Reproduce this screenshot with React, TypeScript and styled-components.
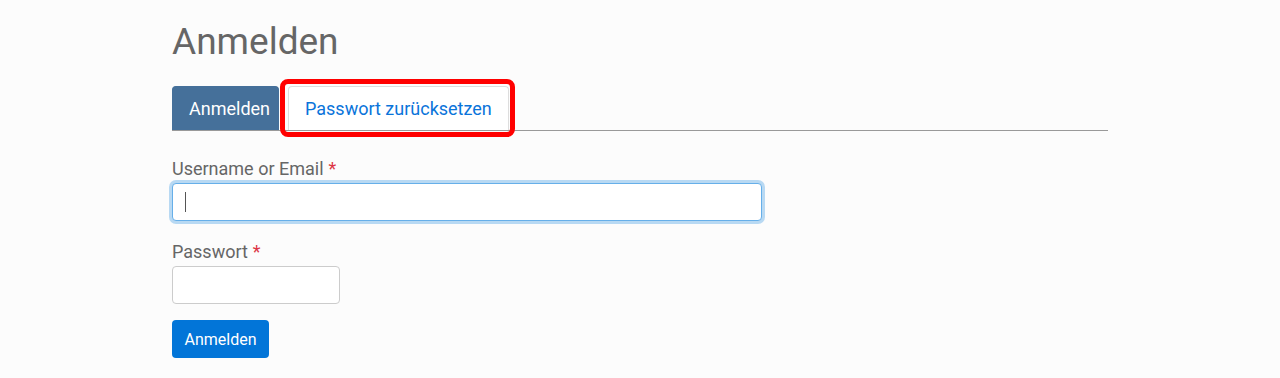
import React from "react";
import styled, { createGlobalStyle } from "styled-components";

const GlobalStyle = createGlobalStyle`
  html, body {
    margin: 0;
    padding: 0;
    background: #fcfcfc;
    font-family: Roboto, "Liberation Sans", Arial, sans-serif;
  }
  * { box-sizing: border-box; }
`;

const Page = styled.main`
  width: 936px;
  margin: 0 auto;
  padding-top: 20px;
`;

const Title = styled.h1`
  margin: 0 0 22px;
  font-size: 37px;
  line-height: 1.2;
  font-weight: 400;
  color: #666;
`;

const TabBar = styled.nav`
  display: flex;
  align-items: flex-end;
  gap: 9px;
  border-bottom: 1px solid #999;
  margin-bottom: 27px;
`;

const Tab = styled.a<{ $active?: boolean }>`
  position: relative;
  display: block;
  height: 44px;
  padding: ${(p) => (p.$active ? "10px 8px 10px 16px" : "10px 16px")};
  font-size: 18px;
  line-height: 24px;
  text-decoration: none;
  border-radius: 4px 4px 0 0;
  border: 1px solid ${(p) => (p.$active ? "#45709a" : "#ddd")};
  border-bottom: none;
  background: ${(p) => (p.$active ? "#45709a" : "#fff")};
  color: ${(p) => (p.$active ? "#fff" : "#0a74da")};
  cursor: pointer;
`;

const Highlight = styled.span`
  position: absolute;
  left: -9px;
  right: -7px;
  top: -8px;
  bottom: -7px;
  border: 5px solid #ff0000;
  border-radius: 8px;
  pointer-events: none;
`;

const Form = styled.form`
  display: flex;
  flex-direction: column;
  align-items: flex-start;
`;

const Field = styled.div`
  display: flex;
  flex-direction: column;
  margin-bottom: 20px;
`;

const Label = styled.label`
  font-size: 18px;
  line-height: 21px;
  color: #666;
  margin-bottom: 4px;
`;

const Required = styled.span`
  color: #dc3545;
  margin-left: 5px;
`;

const InputWrap = styled.div`
  position: relative;
`;

const Input = styled.input<{ $width: number; $focused?: boolean }>`
  display: block;
  width: ${(p) => p.$width}px;
  height: 38px;
  padding: 6px 12px;
  font: inherit;
  font-size: 16px;
  background: #fff;
  border-radius: 4px;
  outline: none;
  border: 1px solid ${(p) => (p.$focused ? "#66afe9" : "#ccc")};
  box-shadow: ${(p) => (p.$focused ? "0 0 0 3px rgba(102, 175, 233, 0.45)" : "none")};
`;

const Caret = styled.span`
  position: absolute;
  left: 13px;
  top: 9px;
  width: 1px;
  height: 20px;
  background: #555;
`;

const Submit = styled.button`
  height: 38px;
  padding: 0 12.5px;
  margin-top: -4px;
  border: none;
  border-radius: 4px;
  background: #0275d8;
  color: #fff;
  font: inherit;
  font-size: 16px;
  cursor: pointer;
`;

export default function App() {
  return (
    <>
      <GlobalStyle />
      <Page>
        <Title>Anmelden</Title>
        <TabBar>
          <Tab $active>Anmelden</Tab>
          <Tab>
            Passwort zurücksetzen
            <Highlight />
          </Tab>
        </TabBar>
        <Form onSubmit={(e) => e.preventDefault()}>
          <Field>
            <Label htmlFor="user">
              Username or Email<Required>*</Required>
            </Label>
            <InputWrap>
              <Input id="user" type="text" $width={590} $focused />
              <Caret />
            </InputWrap>
          </Field>
          <Field>
            <Label htmlFor="pass">
              Passwort<Required>*</Required>
            </Label>
            <Input id="pass" type="password" $width={168} />
          </Field>
          <Submit type="submit">Anmelden</Submit>
        </Form>
      </Page>
    </>
  );
}
